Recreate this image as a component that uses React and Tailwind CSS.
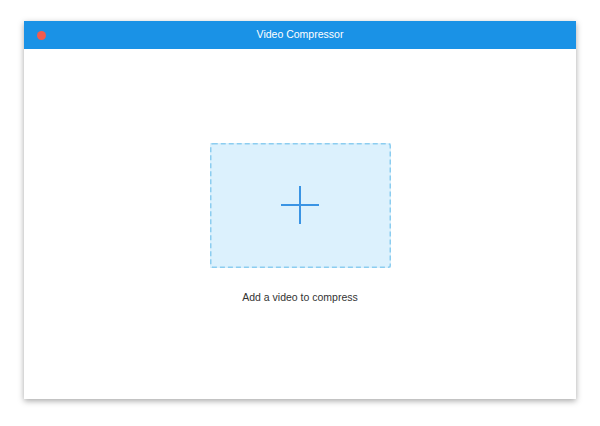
import React from "react";

const App = () => {
    return (
        <div className="w-[600px] h-[426px] bg-white pt-[21px] pl-[24px]" style={{ fontFamily: "'Helvetica Neue', 'Liberation Sans', Arial, sans-serif" }}>
            <div className="w-[552px] h-[378px] bg-white flex flex-col shadow-[0_2px_6px_rgba(0,0,0,0.35)]">
                <div className="relative h-[28px] bg-[#1a92e6] flex items-center justify-center">
                    <span className="absolute left-[13px] top-[10px] w-[9px] h-[9px] rounded-full bg-[#f25b4f]" />
                    <span className="text-white text-[10.5px] font-medium">Video Compressor</span>
                </div>

                <div className="flex-1 flex flex-col items-center pt-[94px]">
                    <div className="relative w-[181px] h-[125px] bg-[#dcf1fd] flex items-center justify-center cursor-pointer">
                        <svg className="absolute inset-0" width="181" height="125">
                            <rect x="0.75" y="0.75" width="179.5" height="123.5" rx="2" fill="none" stroke="#8ccdf0" strokeWidth="1.5" strokeDasharray="5 3" />
                        </svg>
                        <svg width="38" height="38" viewBox="0 0 38 38" className="relative -mt-[1px]">
                            <path d="M19 0 V38 M0 19 H38" stroke="#3a94e4" strokeWidth="2" />
                        </svg>
                    </div>
                    <p className="mt-[22px] text-[10.5px] text-[#333]">Add a video to compress</p>
                </div>
            </div>
        </div>
    );
};

export default App;
